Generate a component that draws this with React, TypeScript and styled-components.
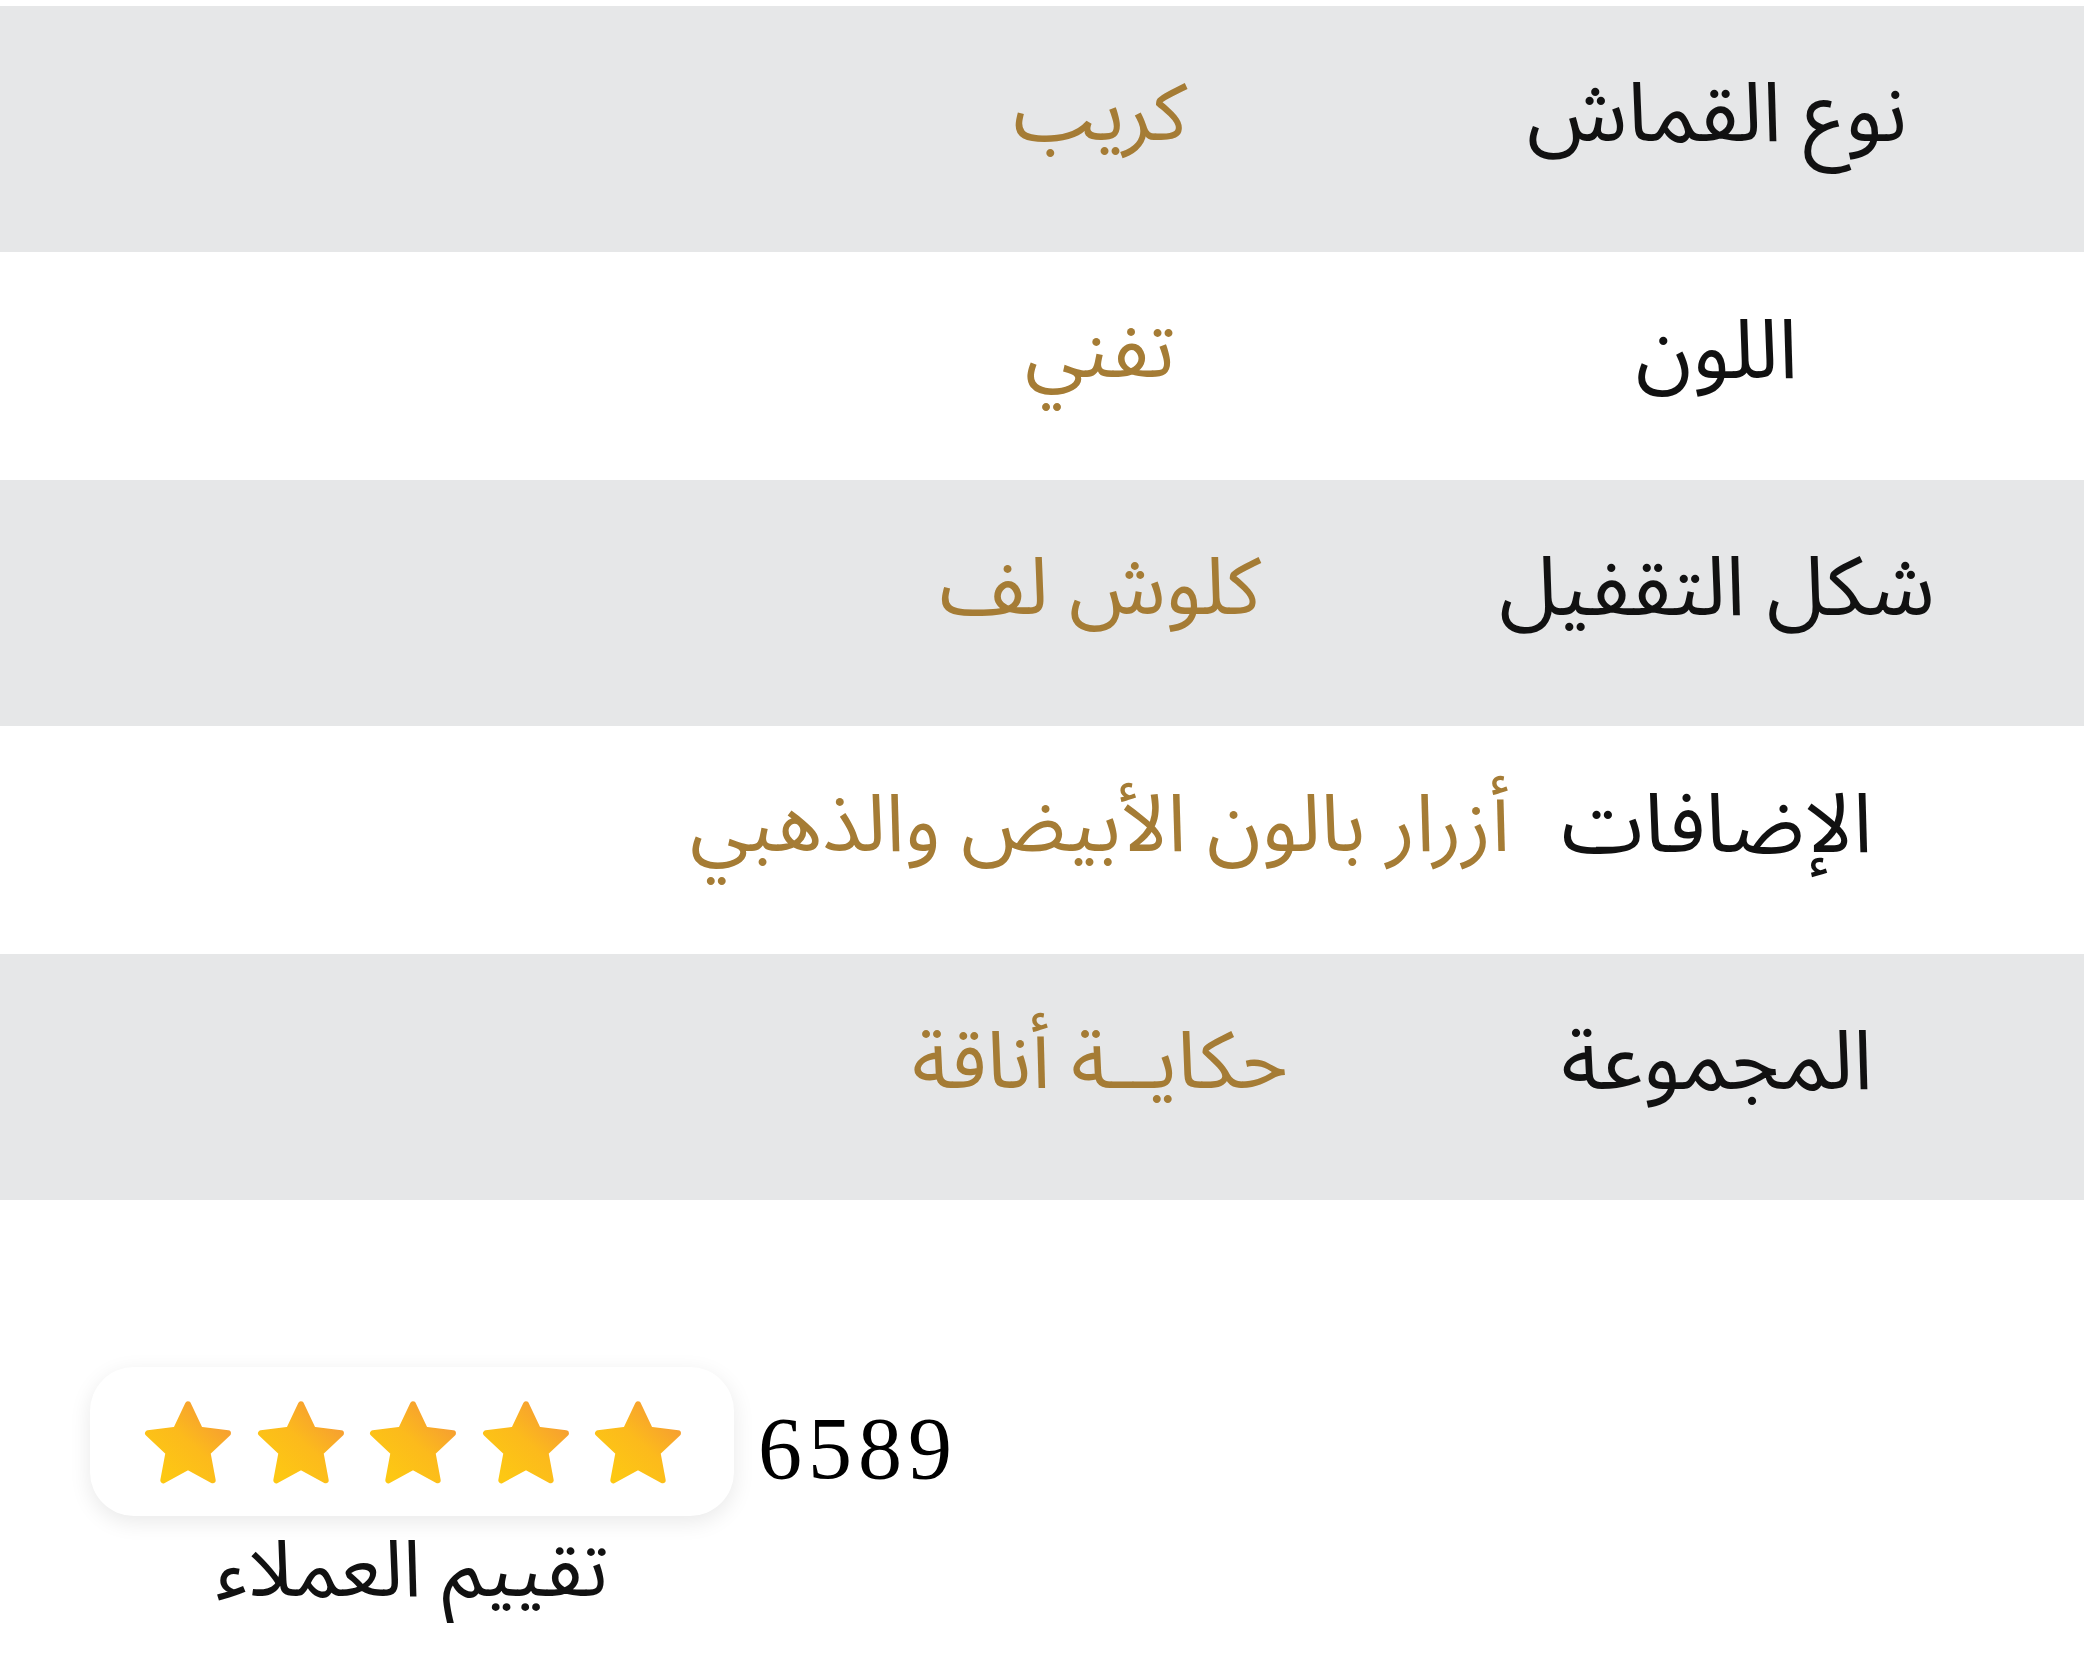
import styled, { createGlobalStyle } from 'styled-components'

const GlobalStyle = createGlobalStyle`
	html, body {
		margin: 0;
		padding: 0;
		background: #ffffff;
	}
	body {
		font-family: 'Noto Sans Arabic', 'DejaVu Sans', sans-serif;
	}
`

const Page = styled.div`
	width: 2084px;
	padding-top: 6px;
	direction: rtl;
`

const SpecsTable = styled.div`
	display: flex;
	flex-direction: column;
`

const SpecRow = styled.div<{ $shaded: boolean }>`
	display: grid;
	grid-template-columns: 734px 500px 1fr;
	align-items: center;
	box-sizing: border-box;
	height: ${(p) => (p.$shaded ? '246px' : '228px')};
	padding-bottom: 28px;
	background: ${(p) => (p.$shaded ? '#e6e7e8' : '#ffffff')};
`

const SpecLabel = styled.div`
	text-align: center;
	font-size: 83px;
	line-height: 1.3;
	color: #111111;
	white-space: nowrap;
`

const SpecValue = styled.div`
	display: flex;
	justify-content: center;
	font-size: 80px;
	line-height: 1.3;
	color: #a57c35;
	white-space: nowrap;
`

const RatingSection = styled.div`
	display: flex;
	direction: ltr;
	align-items: flex-start;
	gap: 24px;
	padding: 167px 0 0 90px;
`

const RatingColumn = styled.div`
	display: flex;
	flex-direction: column;
	align-items: center;
	gap: 4px;
`

const StarCard = styled.div`
	display: flex;
	align-items: center;
	gap: 12.6px;
	width: 644px;
	height: 149px;
	box-sizing: border-box;
	padding: 0 0 0 48px;
	background: #ffffff;
	border-radius: 44px;
	box-shadow: 0 6px 22px rgba(0, 0, 0, 0.09);
`

const RatingLabel = styled.div`
	direction: rtl;
	font-size: 79px;
	line-height: 1.3;
	color: #111111;
`

const RatingCount = styled.div`
	font-family: 'Liberation Serif', serif;
	font-size: 88px;
	letter-spacing: 6px;
	line-height: 1;
	color: #000000;
	margin-top: 38px;
`

const specs = [
	{ label: 'نوع القماش', value: 'كريب' },
	{ label: 'اللون', value: 'تفني' },
	{ label: 'شكل التقفيل', value: 'كلوش لف' },
	{ label: 'الإضافات', value: 'أزرار بالون الأبيض والذهبي' },
	{ label: 'المجموعة', value: 'حكايــة أناقة' },
]

// five-point star, inner radius about half the outer one, corners rounded by the stroke
const starPoints = (() => {
	const pts: string[] = []
	for (let i = 0; i < 10; i++) {
		const r = i % 2 === 0 ? 42 : 20.5
		const a = ((-90 + i * 36) * Math.PI) / 180
		pts.push(`${(50 + r * Math.cos(a)).toFixed(2)},${(52.3 + r * Math.sin(a)).toFixed(2)}`)
	}
	return pts.join(' ')
})()

function Star({ id }: { id: string }) {
	return (
		<svg width='100' height='96' viewBox='0 0 100 96'>
			<defs>
				<linearGradient id={id} x1='0.15' y1='0.9' x2='0.9' y2='0.1'>
					<stop offset='0' stopColor='#fdc813' />
					<stop offset='0.5' stopColor='#fcba1c' />
					<stop offset='1' stopColor='#f59a35' />
				</linearGradient>
			</defs>
			<polygon
				points={starPoints}
				fill={`url(#${id})`}
				stroke={`url(#${id})`}
				strokeWidth='6'
				strokeLinejoin='round'
			/>
		</svg>
	)
}

export default function App() {
	return (
		<Page>
			<GlobalStyle />
			<SpecsTable>
				{specs.map((s, i) => (
					<SpecRow key={s.label} $shaded={i % 2 === 0}>
						<SpecLabel>{s.label}</SpecLabel>
						<SpecValue>{s.value}</SpecValue>
						<div />
					</SpecRow>
				))}
			</SpecsTable>
			<RatingSection>
				<RatingColumn>
					<StarCard>
						{[0, 1, 2, 3, 4].map((n) => (
							<Star key={n} id={`starGrad${n}`} />
						))}
					</StarCard>
					<RatingLabel>تقييم العملاء</RatingLabel>
				</RatingColumn>
				<RatingCount>6589</RatingCount>
			</RatingSection>
		</Page>
	)
}
